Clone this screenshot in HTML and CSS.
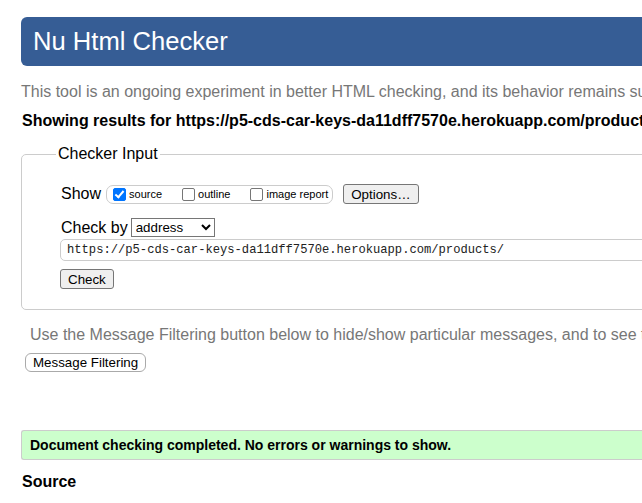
FILE: index.html
```html
<!DOCTYPE html>
<html lang="en">
<head>
<meta charset="utf-8">
<title>Nu Html Checker</title>
<link rel="stylesheet" href="styles.css">
</head>
<body>
<div class="page">
  <h1 class="title">Nu Html Checker</h1>
  <p class="intro">This tool is an ongoing experiment in better HTML checking, and its behavior remains su</p>
  <p class="results">Showing results for https://p5-cds-car-keys-da11dff7570e.herokuapp.com/product</p>

  <fieldset class="input-box">
    <legend class="legend">Checker Input</legend>
    <div class="row show-row">
      <span class="row-label">Show</span>
      <span class="checks">
        <label class="check"><input class="box" type="checkbox" checked>source</label>
        <label class="check"><input class="box" type="checkbox">outline</label>
        <label class="check"><input class="box" type="checkbox">image report</label>
      </span>
      <button class="btn options-btn" type="button">Options…</button>
    </div>
    <div class="row by-row">
      <span class="row-label">Check by</span>
      <select class="by-select"><option>address</option></select>
    </div>
    <input class="url" type="text" value="https://p5-cds-car-keys-da11dff7570e.herokuapp.com/products/">
    <div class="row submit-row">
      <button class="btn check-btn" type="button">Check</button>
    </div>
  </fieldset>

  <p class="filter-note">Use the Message Filtering button below to hide/show particular messages, and to see t</p>
  <button class="filter-btn" type="button">Message Filtering</button>

  <div class="success">Document checking completed. No errors or warnings to show.</div>
  <h2 class="source">Source</h2>
</div>
</body>
</html>
```

FILE: styles.css
```css
html, body {
  margin: 0;
  padding: 0;
  overflow: hidden;
  background: #fff;
}

body {
  font-family: "Liberation Sans", Arial, sans-serif;
  color: #000;
}

.page {
  width: 1100px;
  padding-left: 21px;
}

.title {
  margin: 17px 0 0 0;
  height: 49px;
  line-height: 49px;
  padding-left: 12px;
  background: #365d95;
  color: #fff;
  font-size: 25.6px;
  font-weight: normal;
  border-radius: 6px 0 0 6px;
  white-space: nowrap;
}

.intro {
  margin: 17px 0 0 0;
  font-size: 16px;
  line-height: 18px;
  color: #777;
  white-space: nowrap;
}

.results {
  margin: 11px 0 0 1px;
  font-size: 16px;
  line-height: 18px;
  font-weight: bold;
  white-space: nowrap;
}

.input-box {
  margin: 15px 0 0 0;
  padding: 0 0 20px 39px;
  border: 1px solid #ccc;
  border-radius: 5px 0 0 5px;
  min-width: 0;
}

.legend {
  margin-left: -5px;
  padding: 0 2px;
  font-size: 16px;
  color: #000;
}

.row {
  display: flex;
  align-items: center;
}

.row-label {
  font-size: 16px;
  line-height: 18px;
}

.show-row {
  height: 20px;
  margin-top: 21px;
}

.checks {
  display: inline-flex;
  align-items: center;
  box-sizing: border-box;
  height: 19px;
  margin-left: 5px;
  padding: 0 4px 0 2px;
  border: 1px solid #ccc;
  border-radius: 7px;
  font-size: 11px;
}

.check {
  display: inline-flex;
  align-items: center;
  margin-right: 16px;
}

.check:last-child {
  margin-right: 0;
}

.box {
  -webkit-appearance: none;
  appearance: none;
  position: relative;
  box-sizing: border-box;
  width: 13px;
  height: 13px;
  margin: 0 3px 0 4px;
  background: #fff;
  border: 1px solid #767676;
  border-radius: 2px;
}

.box:checked {
  background: #0075ff;
  border-color: #0075ff;
}

.box:checked::after {
  content: "";
  position: absolute;
  left: 3px;
  top: 0px;
  width: 3px;
  height: 7px;
  border-right: 2px solid #fff;
  border-bottom: 2px solid #fff;
  transform: rotate(40deg);
}

.btn {
  box-sizing: border-box;
  height: 20px;
  padding: 0 7px;
  font-family: "Liberation Sans", Arial, sans-serif;
  font-size: 13.33px;
  color: #000;
  background: #efefef;
  border: 1px solid #767676;
  border-radius: 3px;
}

.options-btn {
  margin-left: 10px;
}

.by-row {
  height: 19px;
  margin-top: 14px;
}

.by-select {
  box-sizing: border-box;
  width: 84px;
  height: 19px;
  margin-left: 3px;
  font-family: "Liberation Sans", Arial, sans-serif;
  font-size: 13.33px;
  color: #000;
  background: #fff;
  border: 1px solid #767676;
  border-radius: 0;
}

.url {
  display: block;
  box-sizing: border-box;
  width: 1000px;
  height: 22px;
  margin: 2px 0 0 -1px;
  padding: 0 6px;
  font-family: "Liberation Mono", "DejaVu Sans Mono", monospace;
  font-size: 12.15px;
  color: #222;
  background: #fff;
  border: 1px solid #ccc;
  border-radius: 5px 0 0 5px;
  outline: none;
}

.submit-row {
  margin-top: 8px;
  margin-left: -1px;
}

.filter-note {
  margin: 16px 0 0 9px;
  font-size: 16px;
  line-height: 18px;
  color: #777;
  white-space: nowrap;
}

.filter-btn {
  display: block;
  box-sizing: border-box;
  height: 19px;
  margin: 9px 0 0 4px;
  padding: 0 7px;
  font-family: "Liberation Sans", Arial, sans-serif;
  font-size: 13.33px;
  color: #000;
  background: #fff;
  border: 1px solid #aaa;
  border-radius: 6px;
}

.success {
  display: flex;
  align-items: center;
  box-sizing: border-box;
  height: 30px;
  margin-top: 58px;
  padding-left: 8px;
  background: #ccffcc;
  border: 1px solid #ccc;
  border-right: none;
  border-radius: 3px 0 0 3px;
  font-size: 14px;
  font-weight: bold;
  white-space: nowrap;
}

.source {
  margin: 13px 0 0 1px;
  font-size: 16px;
  line-height: 18px;
  font-weight: bold;
}
```
